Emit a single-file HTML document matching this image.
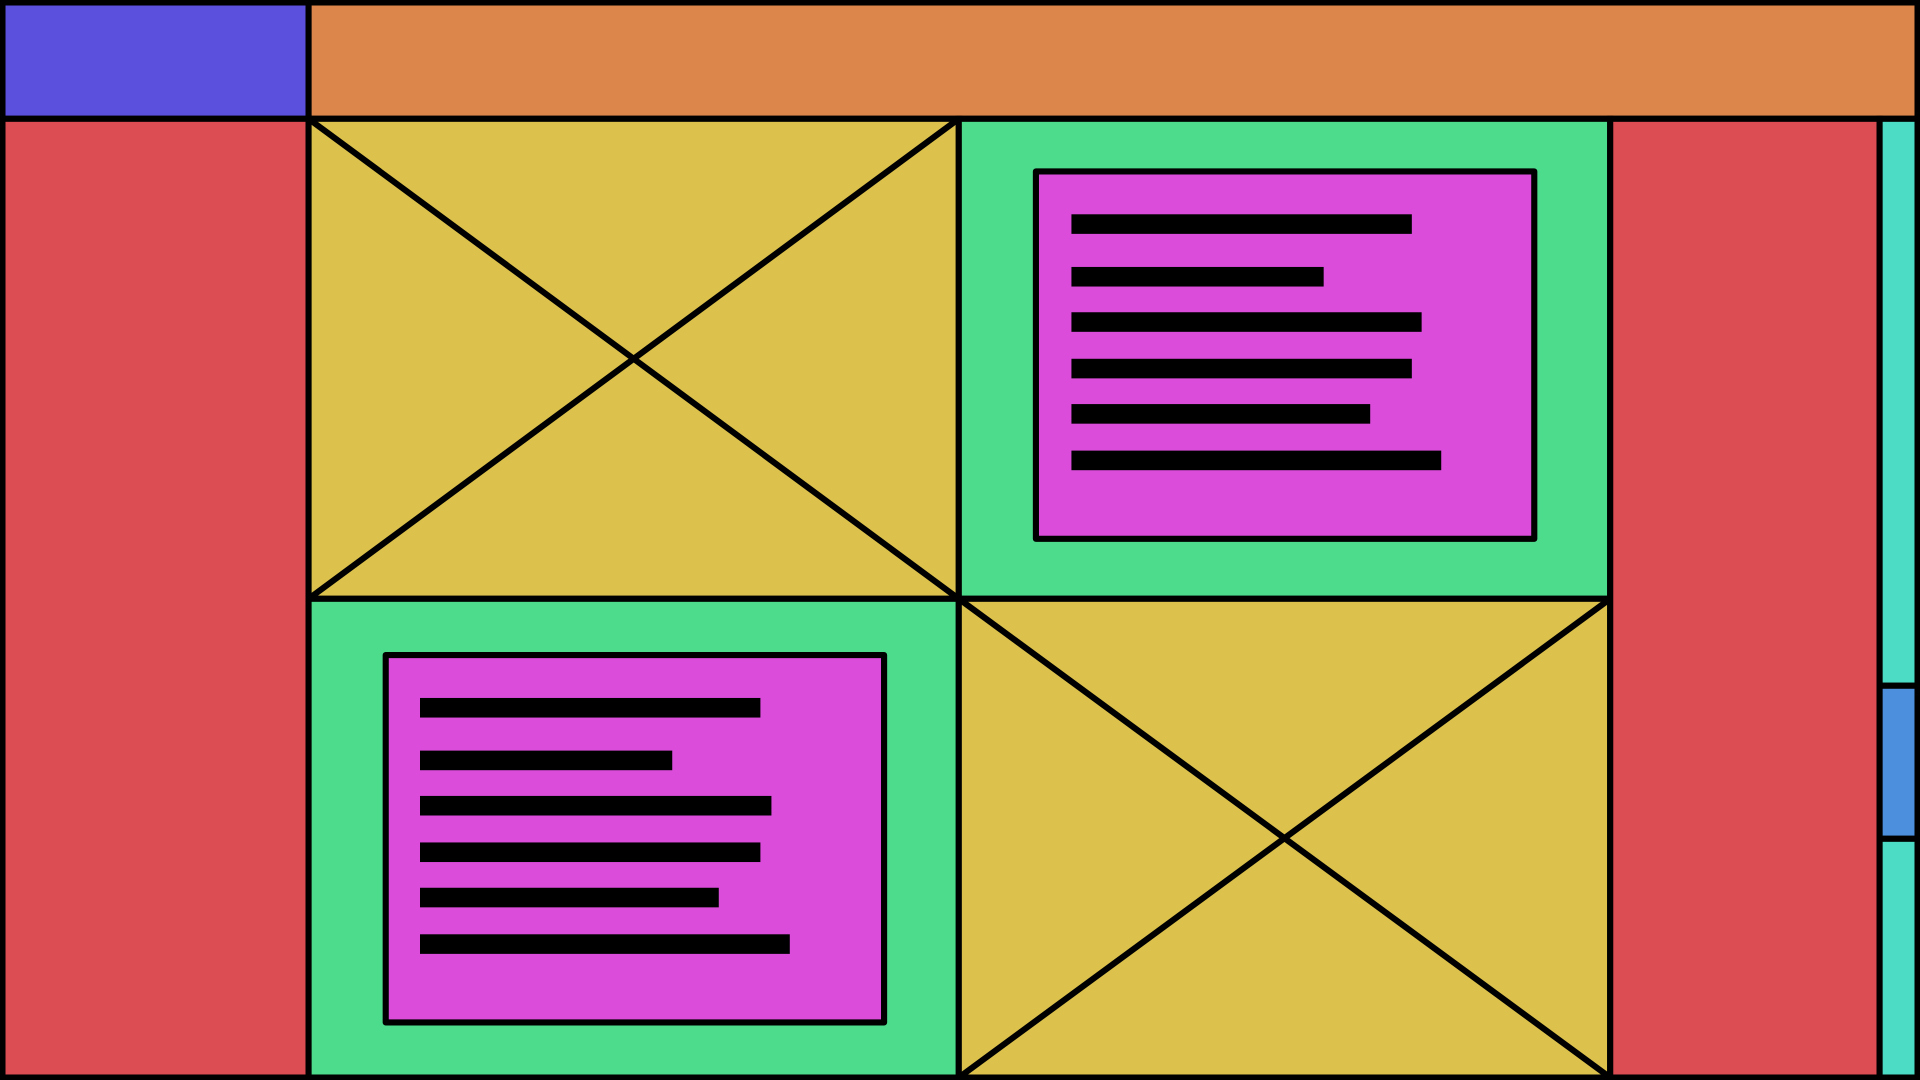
<!DOCTYPE html>
<html><head><meta charset="utf-8"><style>html,body{margin:0;padding:0;width:1920px;height:1080px;overflow:hidden;background:#000}svg{display:block}</style></head>
<body>
<svg width="1920" height="1080" viewBox="0 0 1568 882" preserveAspectRatio="none" xmlns="http://www.w3.org/2000/svg">
<g stroke="#000" stroke-width="5">
<rect x="2" y="2" width="250" height="95" fill="#5b4fde"/>
<rect x="252" y="2" width="1314" height="95" fill="#dc864c"/>
<rect x="2" y="97" width="250" height="783" fill="#dc4c53"/>
<rect x="252" y="97" width="531" height="392" fill="#dcc24c"/>
<line x1="252" y1="97" x2="783" y2="489"/><line x1="783" y1="97" x2="252" y2="489"/>
<rect x="783" y="97" width="532" height="392" fill="#4cdc8c"/>
<rect x="846" y="140" width="407" height="300" fill="#db4cdb" stroke-linejoin="round"/>
<rect x="252" y="489" width="531" height="391" fill="#4cdc8c"/>
<rect x="315" y="535" width="407" height="300" fill="#db4cdb" stroke-linejoin="round"/>
<rect x="783" y="489" width="532" height="391" fill="#dcc24c"/>
<line x1="783" y1="489" x2="1315" y2="880"/><line x1="1315" y1="489" x2="783" y2="880"/>
<rect x="1315" y="97" width="220" height="783" fill="#dc4c53"/>
<rect x="1535" y="97" width="31" height="463" fill="#4cdcc6"/>
<rect x="1535" y="560" width="31" height="125" fill="#4c8fdc"/>
<rect x="1535" y="685" width="31" height="195" fill="#4cdcc6"/>
</g>
<g fill="#000">
<rect x="875" y="175" width="278" height="16"/><rect x="875" y="218" width="206" height="16"/><rect x="875" y="255" width="286" height="16"/><rect x="875" y="293" width="278" height="16"/><rect x="875" y="330" width="244" height="16"/><rect x="875" y="368" width="302" height="16"/>
<rect x="343" y="570" width="278" height="16"/><rect x="343" y="613" width="206" height="16"/><rect x="343" y="650" width="287" height="16"/><rect x="343" y="688" width="278" height="16"/><rect x="343" y="725" width="244" height="16"/><rect x="343" y="763" width="302" height="16"/>
</g>
</svg>
</body></html>
